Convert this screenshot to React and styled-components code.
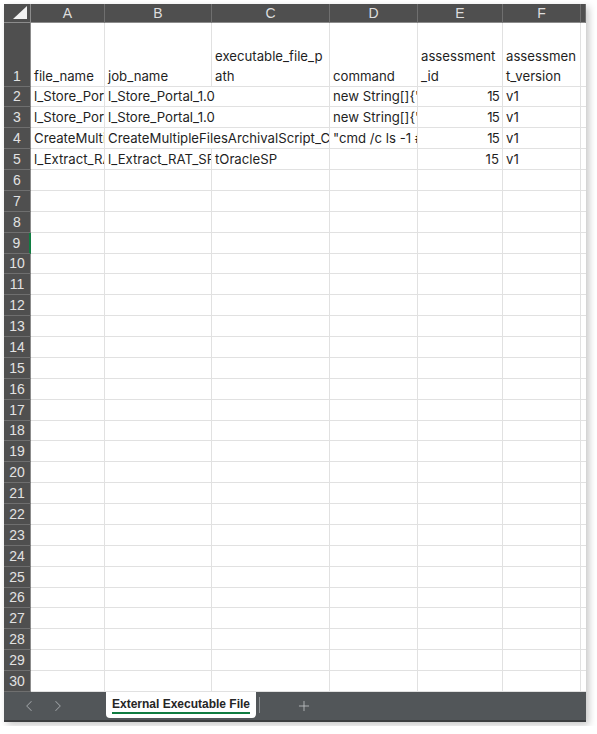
import React from 'react';
import styled, {createGlobalStyle} from 'styled-components';
import {ChevronLeft, ChevronRight, Plus} from 'lucide-react';

const COLS = [74, 107, 118, 88, 85, 78, 5];
const LETTERS = ['A', 'B', 'C', 'D', 'E', 'F', ''];

// each row: list of cells, span = how many columns the cell covers
const DATA = {
    1: [
        {lines: ['file_name']},
        {lines: ['job_name']},
        {lines: ['executable_file_p', 'ath']},
        {lines: ['command']},
        {lines: ['assessment', '_id']},
        {lines: ['assessmen', 't_version']},
        {},
    ],
    2: [
        {text: 'l_Store_Portal_1.0'},
        {text: 'l_Store_Portal_1.0', span: 2},
        {text: 'new String[]{"..."}'},
        {text: '15', right: true},
        {text: 'v1'},
        {},
    ],
    3: [
        {text: 'l_Store_Portal_1.0'},
        {text: 'l_Store_Portal_1.0', span: 2},
        {text: 'new String[]{"..."}'},
        {text: '15', right: true},
        {text: 'v1'},
        {},
    ],
    4: [
        {text: 'CreateMultipleFilesArchivalScript_C'},
        {text: 'CreateMultipleFilesArchivalScript_C', span: 2},
        {text: '"cmd /c ls -1 #"'},
        {text: '15', right: true},
        {text: 'v1'},
        {},
    ],
    5: [
        {text: 'l_Extract_RAT_SP'},
        {text: 'l_Extract_RAT_SP'},
        {text: 'tOracleSP'},
        {},
        {text: '15', right: true},
        {text: 'v1'},
        {},
    ],
};

const emptyRow = COLS.map(() => ({}));

const App = () => {
    const rows = Array.from({length: 30}, (_, i) => i + 1);

    return (
        <Page>
            <GlobalStyle />
            <Window>
                <Sheet>
                    <Corner>
                        <svg width="14" height="13" viewBox="0 0 14 13">
                            <polygon points="14,0 14,13 0,13" fill="#f2f2f2" />
                        </svg>
                    </Corner>
                    {LETTERS.map((l, i) => (
                        <ColHead key={'h' + i}>{l}</ColHead>
                    ))}
                    {rows.map(r => (
                        <React.Fragment key={r}>
                            <RowHead $active={r === 9}>{r}</RowHead>
                            {(DATA[r] || emptyRow).map((c, ci) => (
                                <Cell key={ci} $span={c.span} $right={c.right} $tight={ci === 3 && r > 1}>
                                    {c.lines ? (
                                        <Lines>{c.lines.map((ln, li) => <span key={li}>{ln}</span>)}</Lines>
                                    ) : c.text}
                                </Cell>
                            ))}
                        </React.Fragment>
                    ))}
                </Sheet>
                <TabBar>
                    <Nav>
                        <ChevronLeft size={18} strokeWidth={1.4} />
                        <ChevronRight size={18} strokeWidth={1.4} />
                    </Nav>
                    <Tab>
                        <TabLabel>External Executable File</TabLabel>
                    </Tab>
                    <Divider />
                    <AddButton>
                        <Plus size={16} strokeWidth={1.2} />
                    </AddButton>
                </TabBar>
            </Window>
        </Page>
    );
};

export default App;

const GlobalStyle = createGlobalStyle`
    body {
        margin: 0;
        background: #fff;
        font-family: Inter, "Liberation Sans", sans-serif;
    }
`

const Page = styled.div`
    padding: 4px;
`

const Window = styled.div`
    width: 582px;
    height: 718px;
    display: flex;
    flex-direction: column;
    overflow: hidden;
    box-shadow: 3px 3px 7px rgba(0, 0, 0, 0.22);
`

const Sheet = styled.div`
    display: grid;
    grid-template-columns: 27px ${COLS.map(w => w + 'px').join(' ')};
    grid-template-rows: 19px 63.5px repeat(29, 20.88px);
    background: #fff;
`

const Corner = styled.div`
    background: #4f4f4f;
    border-right: 1px solid #8c8c8c;
    border-bottom: 1px solid #8c8c8c;
    display: flex;
    align-items: flex-end;
    justify-content: flex-end;
    padding: 0 3px 3px 0;
    box-sizing: border-box;
`

const ColHead = styled.div`
    background: #4f4f4f;
    color: #dedede;
    font-family: "Liberation Sans", sans-serif;
    font-size: 14px;
    display: flex;
    align-items: center;
    justify-content: center;
    border-right: 1px solid #6f6f6f;
    border-bottom: 1px solid #8c8c8c;
    box-sizing: border-box;
`

const RowHead = styled.div`
    background: #4f4f4f;
    color: #e2e2e2;
    font-family: "Liberation Sans", sans-serif;
    font-size: 14px;
    display: flex;
    align-items: flex-end;
    justify-content: center;
    padding-bottom: 1px;
    line-height: 18px;
    border-bottom: 1px solid #6f6f6f;
    border-right: ${p => p.$active ? '2px solid #107c41' : '1px solid #8c8c8c'};
    box-sizing: border-box;
`

const Cell = styled.div`
    grid-column: ${p => p.$span ? `span ${p.$span}` : 'auto'};
    display: flex;
    align-items: flex-end;
    justify-content: ${p => p.$right ? 'flex-end' : 'flex-start'};
    padding: 0 3px 0 3px;
    font-size: 13.2px;
    line-height: 20px;
    color: #1f1f1f;
    white-space: nowrap;
    overflow: hidden;
    letter-spacing: ${p => p.$tight ? '-0.8px' : 'normal'};
    border-right: 1px solid #e1e1e1;
    border-bottom: 1px solid #e1e1e1;
    box-sizing: border-box;
`

const Lines = styled.div`
    display: flex;
    flex-direction: column;
`

const TabBar = styled.div`
    flex: 1;
    display: flex;
    align-items: flex-start;
    background: #525659;
    border-bottom: 2px solid #3c3e40;
    box-sizing: border-box;
`

const Nav = styled.div`
    width: 102px;
    height: 28px;
    display: flex;
    align-items: center;
    gap: 11px;
    padding-left: 16px;
    box-sizing: border-box;
    color: #9a9ea1;
`

const Tab = styled.div`
    width: 150px;
    height: 26px;
    background: #fff;
    border-radius: 0 0 4px 4px;
    display: flex;
    justify-content: center;
    padding-top: 4px;
    box-sizing: border-box;
`

const TabLabel = styled.span`
    font-family: "Liberation Sans", sans-serif;
    font-size: 12px;
    font-weight: bold;
    color: #262626;
    line-height: 16px;
    height: 16px;
    border-bottom: 2px solid #107c41;
`

const Divider = styled.div`
    width: 1px;
    height: 16px;
    margin: 5px 0 0 3px;
    background: #8d9194;
`

const AddButton = styled.div`
    height: 28px;
    display: flex;
    align-items: center;
    margin-left: 36px;
    color: #c4c7c9;
`
